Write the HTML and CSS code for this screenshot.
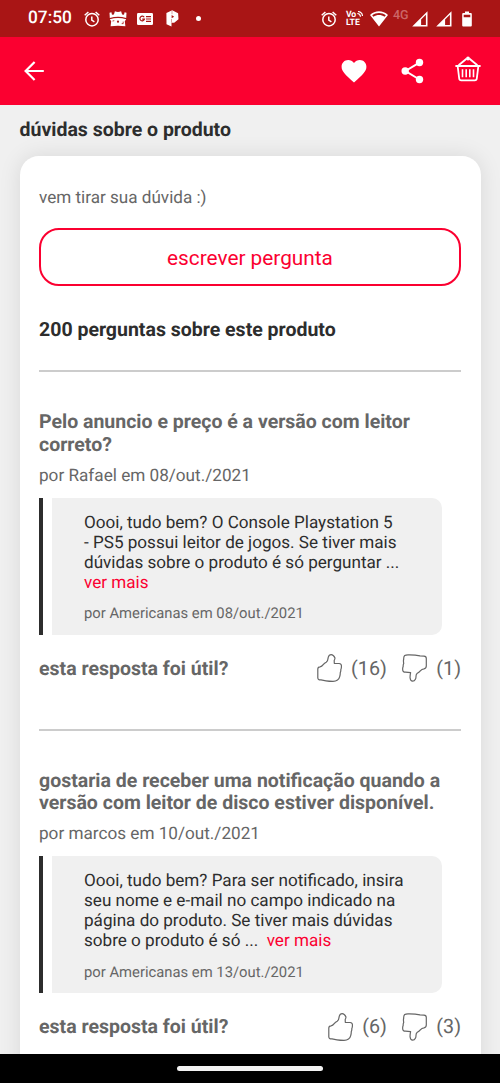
FILE: index.html
```html
<!DOCTYPE html>
<html lang="pt-BR">
<head>
<meta charset="utf-8">
<meta name="viewport" content="width=device-width, initial-scale=1">
<title>dúvidas sobre o produto</title>
<link rel="stylesheet" href="styles.css">
</head>
<body>
<svg class="defs" width="0" height="0" aria-hidden="true">
  <symbol id="alarm" viewBox="0 0 16 16">
    <g fill="none" stroke="#fff" stroke-width="1.5">
      <circle cx="8" cy="8.7" r="6.2"/>
      <path d="M.7 4.200 4.400 1M15.300 4.200 11.600 1"/>
      <path d="M7.8 5.400v3.700l2.600 1.700"/>
    </g>
  </symbol>
  <symbol id="signal" viewBox="0 0 16 16">
    <path fill="#fff" fill-rule="evenodd" d="M15.500.3V15.600H.2zM13.900 3.800 9.100 8.600V14.100h4.800z"/>
  </symbol>
  <symbol id="thumb-up" viewBox="0 0 25 28">
    <path fill="none" stroke="#666" stroke-width="1.2" stroke-linejoin="round" d="M11.3 3.200Q12 .7 14.200.7T18 4Q17.900 5.200 17.200 6.600L17.300 9.300 22 9.500Q24.700 9.700 24.400 12.500 24.500 14 23.800 15.800 24 17 23.300 18.600 23.300 20.500 22.700 22.700 22.200 25 20.500 26 18.800 27.300 16 27.300 12 27.300 9 26.800L4 25.900Q.8 26 .8 23.800V15Q.8 13 3 12.800 4.800 12.500 6.200 10.600 7.500 9 9.200 8.200 10.900 7 10.900 5Z"/>
  </symbol>
  <symbol id="thumb-down" viewBox="0 0 25 28">
    <path fill="none" stroke="#666" stroke-width="1.2" stroke-linejoin="round" d="M2.700 1.500Q4 .7 6.500.8 13 .7 18 1.800L22 2.200Q24.300 2.400 24.300 4.500V12Q24.300 14.500 22 14.900 19.800 15.100 18.300 16.800 17 18.500 15.300 19.300 14 20.300 14 22.300 14.100 24.500 13.200 25.500 12.500 27.200 10.700 27.200 8.400 27 8.100 24 7.900 22 8.600 18.600L3.500 18.200Q.6 18.100.7 15.500.5 14 1.200 12.300 1 11 1.700 9.400 1.200 7 1.700 5 1.600 2.500 2.700 1.500Z"/>
  </symbol>
</svg>

<div class="screen">
  <div class="status">
    <span class="clock">07:50</span>
    <div class="status-left">
      <svg width="16" height="16"><use href="#alarm"/></svg>
      <svg width="18" height="16" viewBox="0 0 18 16">
        <path fill="#fff" d="M.5 1.700 2.400 1.300 3 3.800 4.900 3.500 5.900.2Q9 1.600 12.100.2L13.100 3.500 15 3.800 15.600 1.300 17.500 1.700 17.200 7Q9 4.600.8 7z"/>
        <path fill="#fff" d="M.8 8.300Q9 5.700 17.200 8.300L15.800 10.200 16.400 15.300Q9 14 1.600 15.300L2.200 10.200z"/>
        <circle cx="9" cy="10.700" r="1.100" fill="#a91515"/>
        <path fill="none" stroke="#a91515" stroke-width=".8" d="M3.500 10l1.800-.3M14.200 10.600v2h-1.500"/>
      </svg>
      <svg width="16" height="12" viewBox="0 0 16 12">
        <rect width="16" height="12" rx="1.200" fill="#fff"/>
        <path fill="none" stroke="#a91515" stroke-width="1.200" d="M7.200 4.300A2.300 2.300 0 1 0 7.400 6.200H5.200M9 3.600h5M9 6h5M9 8.400h5"/>
      </svg>
      <svg class="pin" width="13" height="17" viewBox="0 0 13 17">
        <path fill="#fff" d="M.4 3.100 6.200.2l5.900 3 .4 6-4.300 3.500H5.500v3.800L.5 14.200z"/>
        <path fill="#a91515" d="M5.600 5.100 8.200 6.700 5.600 8.200z"/>
        <path stroke="#a91515" stroke-width=".4" d="M6 .7v3.500M5.500 9v3.500"/>
      </svg>
      <span class="dot"></span>
    </div>
    <div class="status-right">
      <svg width="16" height="16"><use href="#alarm"/></svg>
      <div class="volte"><span>Vo<svg width="6" height="6" viewBox="0 0 6 6"><path fill="none" stroke="#fff" stroke-width="1.200" d="M.3 2.500A3.500 3.500 0 0 1 3.500 5.700M1 .5A5 5 0 0 1 5.500 5"/></svg></span><span>LTE</span></div>
      <svg width="18" height="16" viewBox="0 0 18 16">
        <path fill="#fff" fill-rule="evenodd" d="M0 4C5-.9 13-.9 18 4L9 15.500zM2.200 4.200l1.200 1.600c3.400-2.300 7.800-2.300 11.200 0l1.200-1.600C11.800 1.100 6.200 1.100 2.200 4.200z"/>
      </svg>
      <span class="net">4G</span>
      <svg class="sig" width="16" height="16"><use href="#signal"/></svg>
      <svg class="sig2" width="16" height="16"><use href="#signal"/></svg>
      <svg width="10" height="16" viewBox="0 0 10 16">
        <path fill="#fff" fill-rule="evenodd" d="M3 .5h4v1.600h1.800q1 0 1 1V14.500q0 1-1 1H1.200q-1 0-1-1V3.100q0-1 1-1H3zM1.700 3.700v2.500h6.600V3.700z"/>
      </svg>
    </div>
  </div>

  <header class="appbar">
    <svg width="20" height="20" viewBox="0 0 20 20"><path fill="none" stroke="#fff" stroke-width="2.200" d="M19.800 10H2M10.600 1 1.600 10l9 9"/></svg>
    <div class="actions">
      <svg width="26" height="24" viewBox="0 0 26 24"><path fill="#fff" d="M13 23.500C4 15.500.6 12.300.6 7.800.6 4 3.500 1.100 7.200 1.100c2.300 0 4.400 1.100 5.800 2.900 1.400-1.800 3.500-2.900 5.800-2.900 3.700 0 6.600 2.900 6.600 6.700 0 4.500-3.400 7.700-12.400 15.700z"/></svg>
      <svg width="24" height="26" viewBox="0 0 24 26"><path fill="none" stroke="#fff" stroke-width="2" d="M18.400 4.700 4.500 13l13.900 8.500"/><g fill="#fff"><circle cx="18.500" cy="4.500" r="3.700"/><circle cx="4.200" cy="13" r="3.700"/><circle cx="18.500" cy="21.500" r="3.700"/></g></svg>
      <svg width="26" height="26" viewBox="0 0 26 26"><g fill="none" stroke="#fff" stroke-width="1.800"><path d="M.4 10h25.200M2.700 10.500l1.500 12q.2 1.900 2 1.900h13.600q1.800 0 2-1.900l1.500-12"/><path d="M3.600 9.300 11.500 2.700M22.400 9.300 14.500 2.700"/><path stroke-width="1.600" d="M7.500 13.300v8M11.200 13.300v8M14.800 13.300v8M18.500 13.300v8"/></g><circle cx="13" cy="2.500" r="1.900" fill="#fff"/></svg>
    </div>
  </header>

  <main>
    <h1>dúvidas sobre o produto</h1>
    <section class="card">
      <p class="invite">vem tirar sua dúvida :)</p>
      <button class="ask">escrever pergunta</button>
      <h2>200 perguntas sobre este produto</h2>

      <article class="question">
        <h3>Pelo anuncio e preço é a versão com leitor<br>correto?</h3>
        <p class="author">por Rafael em 08/out./2021</p>
        <div class="answer">
          <p class="text">Oooi, tudo bem? O Console Playstation 5<br>- PS5 possui leitor de jogos. Se tiver mais<br>dúvidas sobre o produto é só perguntar ...<br><a>ver mais</a></p>
          <p class="by">por Americanas em 08/out./2021</p>
        </div>
        <div class="useful">
          <strong>esta resposta foi útil?</strong>
          <div class="votes">
            <svg width="25" height="28"><use href="#thumb-up"/></svg><span>(16)</span>
            <svg width="25" height="28"><use href="#thumb-down"/></svg><span>(1)</span>
          </div>
        </div>
      </article>

      <article class="question">
        <h3>gostaria de receber uma notificação quando a<br>versão com leitor de disco estiver disponível.</h3>
        <p class="author">por marcos em 10/out./2021</p>
        <div class="answer">
          <p class="text">Oooi, tudo bem? Para ser notificado, insira<br>seu nome e e-mail no campo indicado na<br>página do produto. Se tiver mais dúvidas<br>sobre o produto é só ...&nbsp; <a>ver mais</a></p>
          <p class="by">por Americanas em 13/out./2021</p>
        </div>
        <div class="useful">
          <strong>esta resposta foi útil?</strong>
          <div class="votes">
            <svg width="25" height="28"><use href="#thumb-up"/></svg><span>(6)</span>
            <svg width="25" height="28"><use href="#thumb-down"/></svg><span>(3)</span>
          </div>
        </div>
      </article>
    </section>
  </main>
  <footer class="navbar"><span></span></footer>
</div>
</body>
</html>
```

FILE: styles.css
```css
* { box-sizing: border-box; margin: 0; padding: 0; }
body { font-family: Roboto, sans-serif; background: #f0f0f0; color: #2d2d2d; text-rendering: geometricPrecision; }
.defs { display: none; }
svg { display: block; flex: none; }
.screen { display: flex; flex-direction: column; height: 1083px; overflow: hidden; }

.status { flex: none; display: flex; height: 37px; background: #a91515; color: #fff; align-items: center; padding: 0 28px 0 28px; }
.clock { width: 55.5px; font-size: 17.3px; font-weight: 500; line-height: 39px; }
.status-left { display: flex; align-items: center; gap: 9.5px; }
.pin { margin-left: 3.5px; }
.dot { width: 5px; height: 5px; border-radius: 50%; background: #fff; margin-left: 7.5px; }
.status-right { display: flex; align-items: center; margin-left: auto; }
.volte { display: flex; flex-direction: column; width: 18px; margin: 0 6px 0 9px; font-size: 8.7px; font-weight: 700; line-height: 8px; }
.volte span { display: flex; }
.volte svg { margin-left: 1px; }
.net { font-size: 12.5px; font-weight: 500; color: #cc6767; margin: -5px 3px 0 5px; line-height: 14px; }
.sig { margin-right: 8px; }
.sig2 { margin-right: 10.5px; }

.appbar { flex: none; height: 68px; background: #fb0030; display: flex; align-items: center; justify-content: space-between; padding: 0 19px 0 24px; }
.actions { display: flex; align-items: center; gap: 34px; }
.actions svg:last-child { margin: -4px 0 0 -4px; }

main { flex: 1; min-height: 0; overflow: hidden; padding: 0 19.5px; }
h1 { font-size: 19.5px; line-height: 24px; font-weight: 700; margin: 13px 0 14px; }
.card { background: #fff; height: 1000px; border-radius: 19px; box-shadow: 0 0 22px rgba(0,0,0,.1); padding: 30px 19.5px 0; }
.invite { font-size: 17.1px; line-height: 24px; color: #666; }
.ask { display: block; width: 100%; height: 58px; margin-top: 18px; padding-top: 1px; border: 2px solid #fb0030; border-radius: 20px; background: #fff; color: #fb0030; font: 20.8px/54px Roboto, sans-serif; }
h2 { font-size: 19.5px; line-height: 24px; font-weight: 700; margin-top: 32px; }
.question { border-top: 2px solid #ccc; margin-top: 28px; padding-top: 39px; }
.question + .question { margin-top: 46.5px; }
h3 { font-size: 19.5px; line-height: 22.5px; font-weight: 700; color: #666; white-space: nowrap; }
.author { font-size: 17.15px; line-height: 22px; color: #666; margin-top: 8.5px; }
.answer { position: relative; height: 137px; margin: 11px 19.5px 0 13px; padding: 15px 0 0 32px; background: #f0f0f0; border-radius: 0 10px 10px 0; white-space: nowrap; }
.answer::before { content: ""; position: absolute; left: -13px; top: 0; width: 4px; height: 100%; background: #2d2d2d; }
.text { font-size: 17.1px; line-height: 20px; }
.text a { color: #fb0030; }
.by { font-size: 14.8px; line-height: 20px; color: #666; margin-top: 10.5px; }
.useful { display: flex; justify-content: space-between; align-items: center; height: 28px; margin-top: 19.5px; color: #666; font-size: 19.5px; }
.votes { display: flex; align-items: center; font-size: 19.7px; }
.votes span { margin: 0 15px 0 9.5px; }
.votes span:last-child { margin-right: 0; }

.navbar { flex: none; height: 29px; background: #000; display: flex; justify-content: center; align-items: center; }
.navbar span { width: 146px; height: 5px; border-radius: 3px; background: #f3f3f3; }
```
